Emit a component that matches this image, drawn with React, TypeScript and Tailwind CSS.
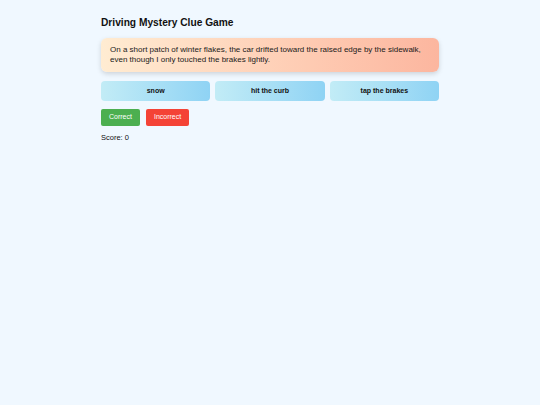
import React, { useState } from "react";

const options = ["snow", "hit the curb", "tap the brakes"];

const App = () => {
  const [score, setScore] = useState(0);

  return (
    <div className="min-h-screen w-full bg-[#f0f8ff] font-['Liberation_Sans',Arial,sans-serif] text-[#111]">
      <div className="mx-auto w-[338px] pt-[16px]">
        <h1 className="text-[10.2px] font-bold leading-[13px]">Driving Mystery Clue Game</h1>
        <div className="mt-[9px] rounded-[6px] bg-gradient-to-r from-[#ffecd2] to-[#fcb69f] px-[9px] py-[7px] text-[8px] leading-[10px] text-[#1a1a1a] shadow-[0_2px_5px_rgba(0,0,0,0.15)]">
          On a short patch of winter flakes, the car drifted toward the raised edge by the sidewalk, even though I only touched the brakes lightly.
        </div>
        <div className="mt-[9px] grid grid-cols-3 gap-[5px]">
          {options.map((o) => (
            <button
              key={o}
              className="h-[20px] rounded-[4px] bg-gradient-to-r from-[#c2ecf6] to-[#8fd3f4] text-[7px] font-bold text-[#111]"
            >
              {o}
            </button>
          ))}
        </div>
        <div className="mt-[8px] flex gap-[6px]">
          <button
            onClick={() => setScore(score + 1)}
            className="h-[17px] rounded-[2px] bg-[#4caf50] px-[8px] text-[7px] text-white"
          >
            Correct
          </button>
          <button
            onClick={() => setScore(score - 1)}
            className="h-[17px] rounded-[2px] bg-[#f44336] px-[8px] text-[7px] text-white"
          >
            Incorrect
          </button>
        </div>
        <p className="mt-[7px] text-[7.5px] leading-[10px]">Score: {score}</p>
      </div>
    </div>
  );
};

export default App;
